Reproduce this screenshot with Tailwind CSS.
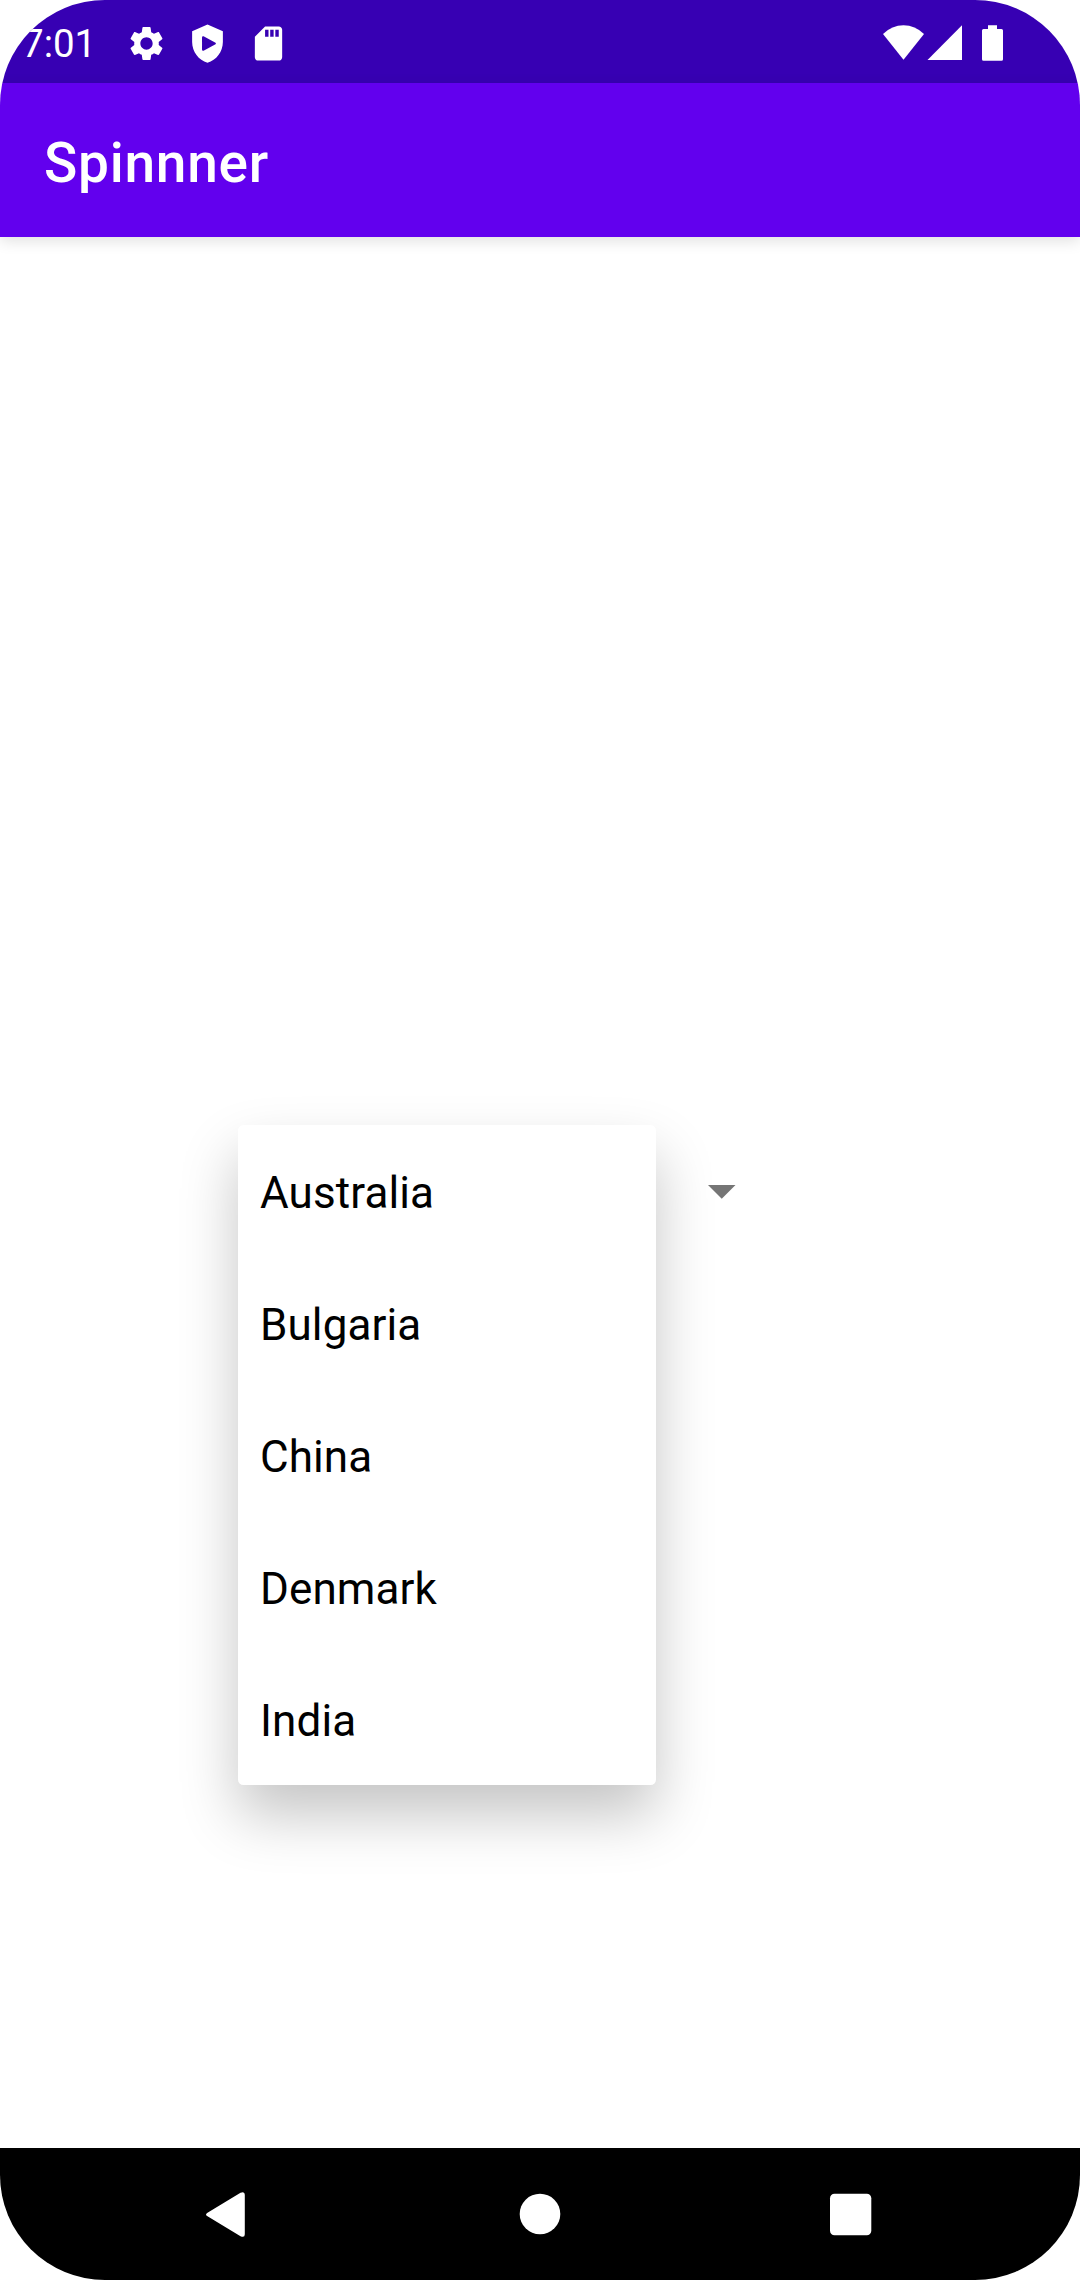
<!DOCTYPE html>
<html lang="en">
<head>
<meta charset="utf-8">
<title>Spinnner</title>
<script src="https://cdn.jsdelivr.net/npm/@tailwindcss/browser@4"></script>
</head>
<body class="bg-white font-['Roboto',sans-serif]">
<div class="relative flex h-[2280px] w-[1080px] flex-col overflow-hidden rounded-[105px] bg-white">
  <!-- Status bar -->
  <header class="flex h-[83px] shrink-0 items-center bg-[#3700b3] pl-[22px] text-white">
    <span class="w-[104px] pt-[5px] text-[38.5px] leading-[46px]">7:01</span>
    <div class="flex gap-[20px] pt-[4px]">
      <svg class="size-[41px]" viewBox="0 0 24 24" fill="currentColor"><path d="M19.14 12.94c.04-.3.06-.61.06-.94 0-.32-.02-.64-.07-.94l2.03-1.58c.18-.14.23-.41.12-.61l-1.92-3.32c-.12-.22-.37-.29-.59-.22l-2.39.96c-.5-.38-1.03-.7-1.62-.94l-.36-2.54c-.04-.24-.24-.41-.48-.41h-3.84c-.24 0-.43.17-.47.41l-.36 2.54c-.59.24-1.13.57-1.62.94l-2.39-.96c-.22-.08-.47 0-.59.22L2.74 8.87c-.12.21-.08.47.12.61l2.03 1.58c-.05.3-.09.63-.09.94s.02.64.07.94l-2.03 1.58c-.18.14-.23.41-.12.61l1.92 3.32c.12.22.37.29.59.22l2.39-.96c.5.38 1.03.7 1.62.94l.36 2.54c.05.24.24.41.48.41h3.84c.24 0 .44-.17.47-.41l.36-2.54c.59-.24 1.13-.56 1.62-.94l2.39.96c.22.08.47 0 .59-.22l1.92-3.32c.12-.22.07-.47-.12-.61l-2.01-1.58zM12 15.6c-1.98 0-3.6-1.62-3.6-3.6s1.62-3.6 3.6-3.6 3.6 1.62 3.6 3.6-1.62 3.6-3.6 3.6z"/></svg>
      <svg class="size-[41px]" viewBox="0 0 24 24" fill="currentColor" fill-rule="evenodd"><path d="M12 .9 3 4.900v6.200c0 5.600 3.840 10.800 9 12.100 5.160-1.300 9-6.500 9-12.100V4.900zM8.800 8.300v7.400q.1.800.9.500l7-3.800q.5-.4 0-.8l-7-3.800q-.8-.3-.9.500z"/></svg>
      <svg class="size-[41px]" viewBox="0 0 24 24" fill="currentColor"><path d="M18 2h-8L4.020 8 4 20c0 1.100.9 2 2 2h12c1.100 0 2-.9 2-2V4c0-1.100-.9-2-2-2zm-6 6h-2V4h2v4zm3 0h-2V4h2v4zm3 0h-2V4h2v4z"/></svg>
    </div>
    <svg class="mt-[24px] mr-[76px] ml-auto h-[38px] w-[122px] self-start" viewBox="882 24 122 38" fill="currentColor">
      <path d="M883 34Q892 25.300 903.500 25.300T924 34L903.500 59.700z"/>
      <path d="M927.500 60 962 25.300V60z"/>
      <path d="M988 25.300h9V29h4.500q1.500 0 1.500 1.500v28.700q0 1.500-1.500 1.500h-18q-1.500 0-1.500-1.500V30.500q0-1.500 1.500-1.500h4.500z"/>
    </svg>
  </header>
  <!-- App bar -->
  <div class="z-10 flex h-[154px] shrink-0 items-center bg-[#6200ee] pl-[44px] shadow-[0_4px_14px_rgba(0,0,0,0.12)]">
    <h1 class="pt-[5px] text-[55px] leading-[64px] font-medium tracking-[0.75px] text-white">Spinnner</h1>
  </div>
  <!-- Content -->
  <main class="flex grow items-start pt-[888px] pl-[238px]">
    <ul class="h-[660px] w-[418px] rounded-[5.5px] bg-white text-[44px] tracking-[0.1px] text-black shadow-[0_30px_58px_rgba(0,0,0,0.23)]">
      <li class="flex h-[132px] items-center pt-[3px] pl-[22px]">Australia</li>
      <li class="flex h-[132px] items-center pt-[3px] pl-[22px]">Bulgaria</li>
      <li class="flex h-[132px] items-center pt-[3px] pl-[22px]">China</li>
      <li class="flex h-[132px] items-center pt-[3px] pl-[22px]">Denmark</li>
      <li class="flex h-[132px] items-center pt-[3px] pl-[22px]">India</li>
    </ul>
    <svg class="mt-[60px] ml-[52px] h-[14px] w-[27.5px]" viewBox="0 0 27.500 14" fill="#757575"><path d="M0 0h27.500L13.750 13.750z"/></svg>
  </main>
  <!-- Navigation bar -->
  <nav class="h-[132px] shrink-0 bg-black text-white">
    <svg class="h-[132px] w-[1080px]" viewBox="0 2148 1080 132" fill="currentColor">
      <path d="M207.500 2216.300q-3-1.800 0-3.600L240.500 2192.800q4.300-2 4.300 2v39.400q0 4-4.300 2z"/>
      <circle cx="540" cy="2214" r="20.300"/>
      <rect x="830" y="2193.700" width="41.300" height="41.600" rx="4.500"/>
    </svg>
  </nav>
</div>
</body>
</html>
